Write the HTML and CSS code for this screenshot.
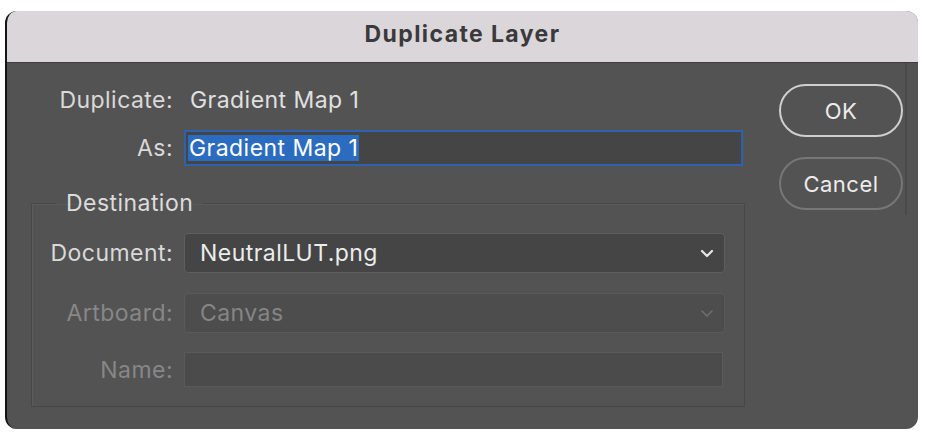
FILE: index.html
```html
<!DOCTYPE html>
<html lang="en">
<head>
<meta charset="utf-8">
<title>Duplicate Layer</title>
<link rel="stylesheet" href="styles.css">
</head>
<body>
<div class="window">
  <div class="titlebar">Duplicate Layer</div>
  <div class="content">
    <div class="main">
      <div class="grid top">
        <span class="label">Duplicate:</span>
        <span class="value">Gradient Map 1</span>
        <span class="label">As:</span>
        <div class="input focus"><span class="sel">Gradient Map 1</span></div>
      </div>
      <fieldset class="dest">
        <legend>Destination</legend>
        <div class="grid fields">
          <span class="label">Document:</span>
          <div class="select"><span>NeutralLUT.png</span>
            <svg class="chev" width="14" height="9" viewBox="0 0 14 9"><path d="M2 2 L7 7 L12 2" fill="none" stroke="currentColor" stroke-width="2.2" stroke-linecap="round" stroke-linejoin="round"/></svg>
          </div>
          <span class="label dim">Artboard:</span>
          <div class="select disabled"><span>Canvas</span>
            <svg class="chev" width="14" height="9" viewBox="0 0 14 9"><path d="M2 2 L7 7 L12 2" fill="none" stroke="currentColor" stroke-width="1.6" stroke-linecap="round" stroke-linejoin="round"/></svg>
          </div>
          <span class="label dim">Name:</span>
          <div class="input disabled name"></div>
        </div>
      </fieldset>
    </div>
    <div class="buttons">
      <button class="btn ok">OK</button>
      <button class="btn cancel">Cancel</button>
    </div>
  </div>
</div>
</body>
</html>
```
FILE: styles.css
```css
* { box-sizing: border-box; }
html, body { margin: 0; padding: 0; background: #ffffff; }
body {
  font-family: Inter, "Liberation Sans", sans-serif;
  font-size: 23px;
  color: #d9d9d9;
  padding-top: 11px;
  padding-left: 5px;
}
.window {
  width: 913px;
  height: 418px;
  background: #535353;
  border-left: 2px solid #141414;
  border-radius: 12px;
  overflow: hidden;
}
.titlebar {
  height: 52px;
  background: #dad6da;
  border-bottom: 1px solid #3c3c3c;
  color: #3a393b;
  font-weight: 700;
  font-size: 23px;
  letter-spacing: 1.4px;
  display: flex;
  align-items: center;
  justify-content: center;
  padding-bottom: 6px;
}
.content {
  display: flex;
  padding-left: 24px;
}
.main {
  width: 714px;
  padding-top: 24px;
}
.grid {
  display: grid;
  column-gap: 11px;
  align-items: center;
}
.top {
  grid-template-columns: 142px 1fr;
  row-gap: 17px;
}
.label {
  text-align: right;
  letter-spacing: 0.45px;
  line-height: 26px;
  white-space: nowrap;
}
.label.dim { color: #878787; }
.value {
  padding-left: 6px;
  letter-spacing: 0.45px;
  line-height: 26px;
  color: #e0e0e0;
}
.input {
  height: 36px;
  background: #454545;
  border: 1px solid #5c5c5c;
  margin-right: 2px;
  display: flex;
  align-items: center;
}
.input.focus {
  border: 2px solid #2d63ae;
  padding-left: 2px;
}
.sel {
  background: #2c6cc0;
  color: #ffffff;
  letter-spacing: 0.45px;
  line-height: 26px;
  padding: 0 1px;
}
.dest {
  margin: 24px 0 0 0;
  padding: 17px 19px 19px 0;
  border: 1px solid #474747;
  box-shadow: inset 1px 1px 0 #5b5b5b;
  min-width: 0;
}
.dest legend {
  margin-left: 24px;
  padding: 0 10px;
  line-height: 26px;
  letter-spacing: 0.45px;
  color: #dcdcdc;
}
.fields {
  grid-template-columns: 141px 1fr;
  row-gap: 20px;
}
.select {
  height: 40px;
  background: #454545;
  border: 1px solid #5e5e5e;
  border-radius: 4px;
  display: flex;
  align-items: center;
  justify-content: space-between;
  padding: 0 10px 0 15px;
  letter-spacing: 0.45px;
  color: #ececec;
}
.select .chev { color: #e6e6e6; }
.select.disabled {
  background: #4d4d4d;
  border-color: #5a5a5a;
  color: #858585;
}
.select.disabled .chev { color: #6e6e6e; }
.input.disabled {
  background: #4b4b4b;
  border-color: #5a5a5a;
}
.name { height: 35px; margin-top: -1px; }
.buttons {
  margin-left: 34px;
  padding-top: 21px;
  width: 128px;
  height: 152px;
  border-right: 2px solid #4a4a4a;
  display: flex;
  flex-direction: column;
  gap: 20px;
}
.btn {
  width: 124px;
  height: 53px;
  border-radius: 27px;
  background: #535353;
  font-family: Inter, "Liberation Sans", sans-serif;
  font-size: 22px;
  letter-spacing: 0.5px;
  color: #ececec;
  padding: 0;
}
.btn.ok { border: 2px solid #cfcfcf; }
.btn.cancel { border: 2px solid #777777; }
```
